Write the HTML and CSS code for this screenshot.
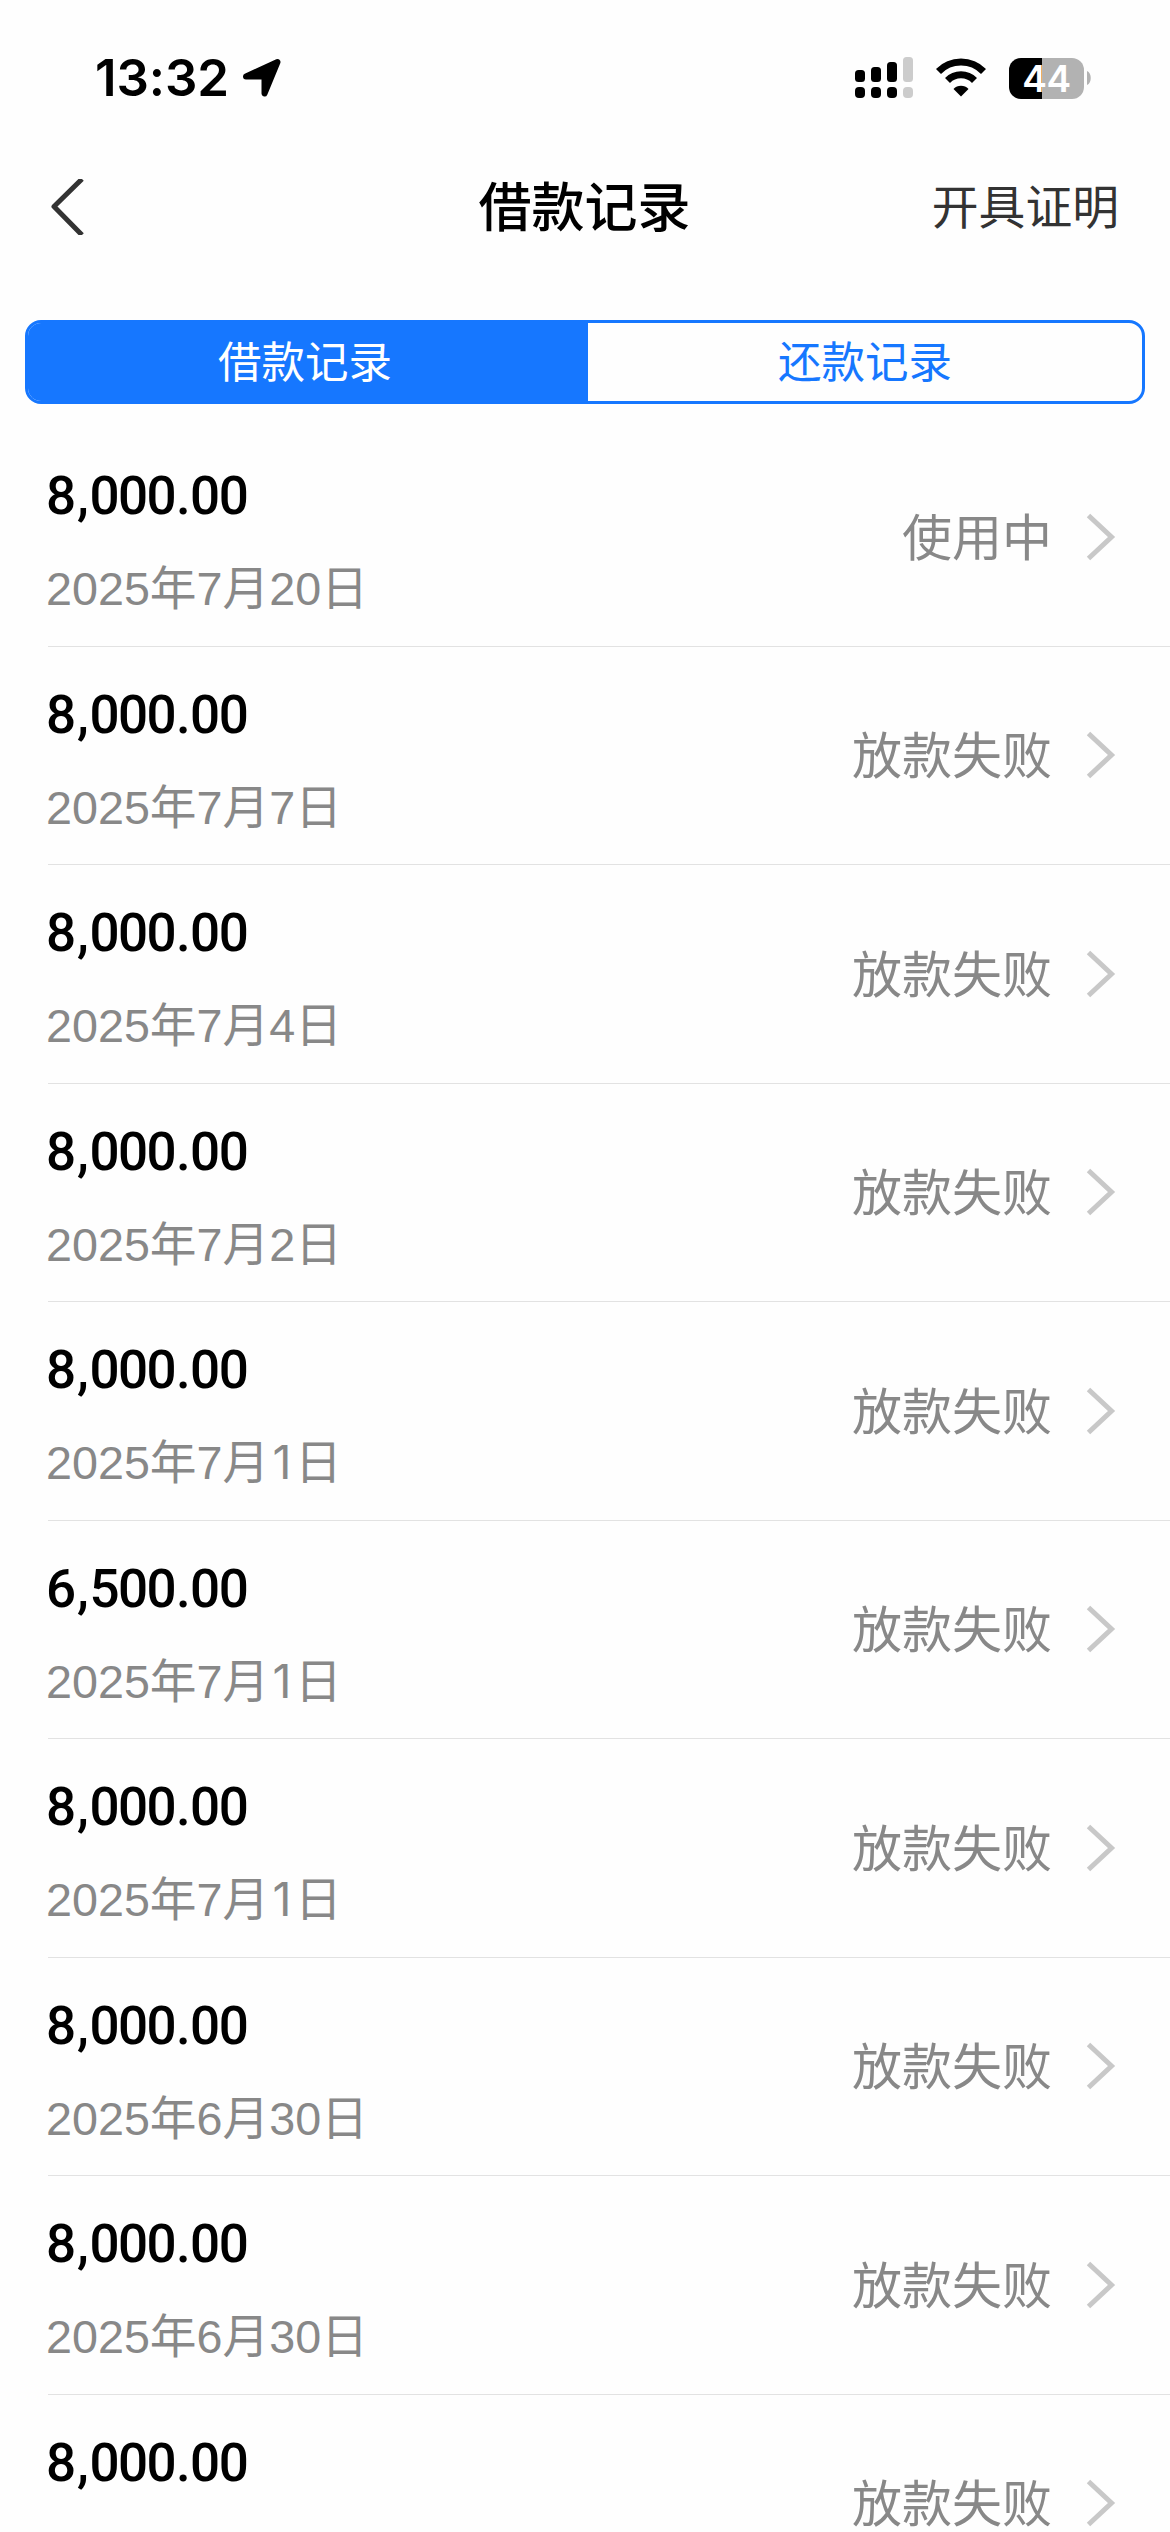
FILE: index.html
```html
<!DOCTYPE html>
<html lang="zh-CN">
<head>
<meta charset="utf-8">
<title>借款记录</title>
<link rel="stylesheet" href="styles.css">
</head>
<body>
<svg class="defs" width="0" height="0" aria-hidden="true">
  <symbol id="chevron" viewBox="0 0 30 50"><path d="M2.5 3.5 25.500 25 2.500 46.500" fill="none" stroke="currentColor" stroke-width="5"/></symbol>
</svg>
<div class="screen">
  <header class="status-bar">
    <div class="clock">
      <span class="time">13:32</span>
      <svg class="location" width="40" height="40" viewBox="0 0 40 40"><path d="M4 18.500 35.500 4 22.500 35.500V18.500Z" fill="#000" stroke="#000" stroke-width="6" stroke-linejoin="round"/></svg>
    </div>
    <div class="indicators">
      <svg width="58" height="42" viewBox="0 0 58 42">
        <g fill="#000"><rect y="13" width="10" height="12" rx="3.500"/><rect x="16" y="10" width="10" height="15" rx="3.500"/><rect x="32" y="5" width="10" height="20" rx="3.500"/><rect y="30" width="10" height="11" rx="4"/><rect x="16" y="30" width="10" height="11" rx="4"/><rect x="32" y="30" width="10" height="11" rx="4"/></g>
        <g fill="#ccc"><rect x="48" width="10" height="25" rx="3.500"/><rect x="48" y="30" width="10" height="11" rx="4"/></g>
      </svg>
      <svg class="wifi" width="52" height="40" viewBox="0 0 52 40">
        <path d="M3.500 13.500A31.500 31.500 0 0 1 48.500 13.500M12.500 22.500A19 19 0 0 1 39.500 22.500" fill="none" stroke="#000" stroke-width="7"/>
        <path d="M26 38.500 18.500 31A10.500 10.500 0 0 1 33.500 31Z"/>
      </svg>
      <div class="battery"><div class="battery-body">44</div><svg width="4" height="14" viewBox="0 0 4 14"><path d="M0 0C5 2 5 12 0 14Z" fill="#b2b2b2"/></svg></div>
    </div>
  </header>
  <nav class="nav-bar">
    <svg class="back" width="36" height="56" viewBox="0 0 36 56"><path d="M33 0 5 27.500 33 56" fill="none" stroke="#333" stroke-width="5" stroke-linejoin="round"/></svg>
    <h1 class="title">借款记录</h1>
    <span class="action">开具证明</span>
  </nav>
  <div class="tabs">
    <div class="tab active">借款记录</div>
    <div class="tab">还款记录</div>
  </div>
  <main class="list">
    <div class="row"><div class="info"><div class="amount">8<span class="sep">,</span>000<span class="sep">.</span>00</div><div class="date">2025年7月20日</div></div><span class="state">使用中</span><svg class="arrow"><use href="#chevron"/></svg></div>
    <div class="row"><div class="info"><div class="amount">8<span class="sep">,</span>000<span class="sep">.</span>00</div><div class="date">2025年7月7日</div></div><span class="state">放款失败</span><svg class="arrow"><use href="#chevron"/></svg></div>
    <div class="row"><div class="info"><div class="amount">8<span class="sep">,</span>000<span class="sep">.</span>00</div><div class="date">2025年7月4日</div></div><span class="state">放款失败</span><svg class="arrow"><use href="#chevron"/></svg></div>
    <div class="row"><div class="info"><div class="amount">8<span class="sep">,</span>000<span class="sep">.</span>00</div><div class="date">2025年7月2日</div></div><span class="state">放款失败</span><svg class="arrow"><use href="#chevron"/></svg></div>
    <div class="row"><div class="info"><div class="amount">8<span class="sep">,</span>000<span class="sep">.</span>00</div><div class="date">2025年7月<span class="one">1</span>日</div></div><span class="state">放款失败</span><svg class="arrow"><use href="#chevron"/></svg></div>
    <div class="row"><div class="info"><div class="amount">6<span class="sep">,</span>500<span class="sep">.</span>00</div><div class="date">2025年7月<span class="one">1</span>日</div></div><span class="state">放款失败</span><svg class="arrow"><use href="#chevron"/></svg></div>
    <div class="row"><div class="info"><div class="amount">8<span class="sep">,</span>000<span class="sep">.</span>00</div><div class="date">2025年7月<span class="one">1</span>日</div></div><span class="state">放款失败</span><svg class="arrow"><use href="#chevron"/></svg></div>
    <div class="row"><div class="info"><div class="amount">8<span class="sep">,</span>000<span class="sep">.</span>00</div><div class="date">2025年6月30日</div></div><span class="state">放款失败</span><svg class="arrow"><use href="#chevron"/></svg></div>
    <div class="row"><div class="info"><div class="amount">8<span class="sep">,</span>000<span class="sep">.</span>00</div><div class="date">2025年6月30日</div></div><span class="state">放款失败</span><svg class="arrow"><use href="#chevron"/></svg></div>
    <div class="row"><div class="info"><div class="amount">8<span class="sep">,</span>000<span class="sep">.</span>00</div><div class="date">2025年6月30日</div></div><span class="state">放款失败</span><svg class="arrow"><use href="#chevron"/></svg></div>
  </main>
</div>
</body>
</html>
```
FILE: styles.css
```css
* { box-sizing: border-box; }

body {
  margin: 0;
  background: #fefefe;
  font-family: "Liberation Sans", "Noto Sans CJK SC", sans-serif;
}

svg { display: block; flex: none; }
.defs { position: absolute; }

.screen {
  width: 1170px;
  height: 2532px;
  overflow: hidden;
}

.status-bar {
  display: flex;
  justify-content: space-between;
  align-items: center;
  height: 156px;
  padding: 0 79px 0 95px;
}

.clock, .indicators, .battery { display: flex; align-items: center; }

.time {
  width: 147px;
  font: 600 51px/60px Inter, sans-serif;
  letter-spacing: -0.1px;
}

.wifi { margin: 0 22px 0 22px; }
.battery { gap: 3px; }

.battery-body {
  width: 75px;
  height: 41px;
  border-radius: 12px;
  background: linear-gradient(90deg, #000 33px, #b2b2b2 33px);
  color: #fff;
  font: 600 37px/41px Inter, sans-serif;
  letter-spacing: -0.5px;
  text-align: center;
}

.nav-bar {
  display: grid;
  grid-template-columns: 1fr auto 1fr;
  align-items: center;
  height: 102px;
  padding: 0 51px 0 49px;
}

.title {
  margin: 0;
  padding: 3px 0 0 1px;
  font-size: 53px;
  font-weight: 500;
  line-height: 70px;
}

.action {
  justify-self: end;
  padding-top: 2px;
  color: #333;
  font-size: 46.8px;
  line-height: 60px;
}

.tabs {
  display: flex;
  height: 84px;
  margin: 62px 25px 24px;
  border: 3px solid #1677ff;
  border-radius: 16px;
  overflow: hidden;
}

.tab {
  flex: 1;
  color: #1677ff;
  font-size: 43.5px;
  line-height: 81px;
  text-align: center;
}

.tab.active {
  flex: 0 0 560px;
  padding-right: 6px;
  background: #1677ff;
  color: #fff;
}

.row {
  display: flex;
  align-items: center;
  height: 218.5px;
  margin-left: 48px;
  padding-right: 54px;
  border-bottom: 1px solid #e2e2e2;
}

.info {
  display: flex;
  flex: 1;
  flex-direction: column;
  gap: 29px;
  margin-left: -2px;
  padding-top: 12px;
}

.amount {
  font: 500 53px/64px Roboto, sans-serif;
  letter-spacing: -1.6px;
}

.sep {
  display: inline-block;
  width: 15px;
  text-align: center;
}

.date {
  color: #888;
  font-size: 46.7px;
  line-height: 64px;
}

.one {
  display: inline-block;
  width: 25.8px;
  font-family: Inter, sans-serif;
  line-height: 1;
  text-align: center;
}

.state {
  padding-top: 4px;
  color: #888;
  font-size: 50px;
  line-height: 64px;
}

.arrow {
  width: 30px;
  height: 50px;
  margin-left: 34px;
  color: #c8c8c8;
}
```
